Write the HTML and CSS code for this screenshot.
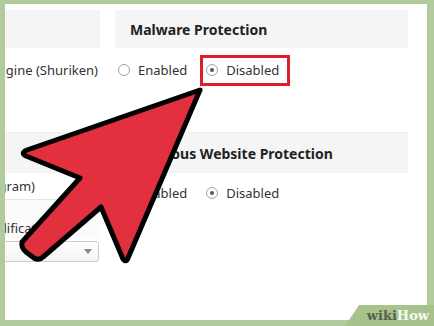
FILE: index.html
```html
<!DOCTYPE html>
<html lang="en">

<head>
    <meta charset="UTF-8">
    <meta name="viewport" content="width=device-width, initial-scale=1.0">
    <title>Malware Protection</title>
    <link rel="stylesheet" href="styles.css">
</head>

<body>
    <div class="frame">
        <div class="window">
            <!-- left column, cut off by the crop -->
            <div class="col col-left">
                <div class="panel"></div>
                <div class="row row-end"><span>Antivirus Engine (Shuriken)</span></div>
                <div class="divider"></div>
                <div class="panel panel-tall"></div>
                <div class="row row-small"><span>Potentially Unwanted Program)</span></div>
                <div class="line"></div>
                <div class="row row-label"><span class="shift">Qualification</span></div>
                <div class="select"><span class="caret"></span></div>
            </div>

            <!-- right column -->
            <div class="col col-right">
                <div class="panel">
                    <h2>Malware Protection</h2>
                </div>
                <div class="row options">
                    <label class="option"><span class="radio"></span>Enabled</label>
                    <label class="option highlight"><span class="radio on"></span>Disabled</label>
                </div>
                <div class="divider"></div>
                <div class="panel panel-tall">
                    <h2>Malicious Website Protection</h2>
                </div>
                <div class="row options row-tall">
                    <label class="option"><span class="radio"></span>Enabled</label>
                    <label class="option"><span class="radio on"></span>Disabled</label>
                </div>
            </div>
        </div>

        <svg class="arrow" width="434" height="326" viewBox="0 0 434 326">
            <path d="M200 90 L27 150 Q20 153 26 156 L80 178 L22 242 Q21 248 26 252 L34 258 Q39 261 43 257 L101 207 L123 259 Q126 263 128 258 Z"
                fill="#e2303f" stroke="#000" stroke-width="5" stroke-linejoin="round" />
        </svg>

        <div class="logo"><span class="wiki">wiki</span><span class="how">How</span></div>
    </div>
</body>

</html>
```

FILE: styles.css
```css
body {
    margin: 0;
    font-family: 'Noto Sans', sans-serif;
    background-color: #b2cb9d;
}

.frame {
    position: relative;
    width: 434px;
    height: 326px;
    box-sizing: border-box;
    padding: 4px 7px 6px 5px;
    overflow: hidden;
}

.window {
    display: flex;
    gap: 15px;
    height: 316px;
    padding-top: 6px;
    box-sizing: border-box;
    background-color: #fff;
    color: #333;
    font-size: 13px;
}

.col {
    display: flex;
    flex-direction: column;
    overflow: hidden;
}

.col-left {
    width: 95px;
}

.col-right {
    width: 293px;
}

.panel {
    display: flex;
    align-items: center;
    height: 38px;
    padding-left: 15px;
    background-color: #f5f5f5;
}

.panel-tall {
    height: 40px;
}

.panel h2 {
    margin: 0;
    font-size: 14px;
    font-weight: bold;
    color: #222;
    white-space: nowrap;
}

.row {
    display: flex;
    align-items: center;
    height: 44px;
    white-space: nowrap;
}

.row-end {
    justify-content: flex-end;
    padding-right: 2px;
}

.row-small {
    justify-content: flex-end;
    height: 26px;
    padding-right: 65px;
}

.row-label {
    height: auto;
    padding-top: 18px;
    line-height: 20px;
    background-color: #fbfbfb;
}

.shift {
    margin-left: -27px;
}

.row-tall {
    height: 40px;
}

.divider {
    margin-top: 40px;
    height: 1px;
    flex-shrink: 0;
    background-color: #eee;
}

.line {
    height: 1px;
    flex-shrink: 0;
    background-color: #e4e4e4;
}

.select {
    display: flex;
    align-items: center;
    justify-content: flex-end;
    flex-shrink: 0;
    height: 21px;
    margin: 3px 1px 0 -4px;
    padding-right: 6px;
    box-sizing: border-box;
    border: 1px solid #ccc;
    border-radius: 3px;
    background: linear-gradient(#fff, #f4f4f4);
}

.caret {
    width: 0;
    height: 0;
    border-left: 4px solid transparent;
    border-right: 4px solid transparent;
    border-top: 5px solid #888;
}

.options {
    gap: 2px;
    margin-left: -3px;
}

.option {
    display: flex;
    align-items: center;
    gap: 8px;
    height: 31px;
    padding: 0 8px 0 3px;
    box-sizing: border-box;
    border: 3px solid transparent;
}

.option.highlight {
    border-color: #d9202c;
}

.radio {
    position: relative;
    width: 12px;
    height: 12px;
    box-sizing: border-box;
    border: 1px solid #a5a5a5;
    border-radius: 50%;
    background-color: #fff;
}

.radio.on::after {
    content: "";
    position: absolute;
    top: 3px;
    left: 3px;
    width: 4px;
    height: 4px;
    border-radius: 50%;
    background-color: #555;
}

.arrow {
    position: absolute;
    top: 0;
    left: 0;
    pointer-events: none;
}

.logo {
    position: absolute;
    right: 0;
    bottom: 0;
    width: 89px;
    height: 21px;
    padding-right: 5px;
    box-sizing: border-box;
    display: flex;
    align-items: center;
    justify-content: flex-end;
    background-color: #a5c38b;
    clip-path: polygon(14px 0, 100% 0, 100% 100%, 0 100%);
    font-family: 'DejaVu Serif', serif;
    font-weight: bold;
    font-size: 13px;
}

.wiki {
    color: #56604d;
}

.how {
    color: #f7faf3;
}
```
